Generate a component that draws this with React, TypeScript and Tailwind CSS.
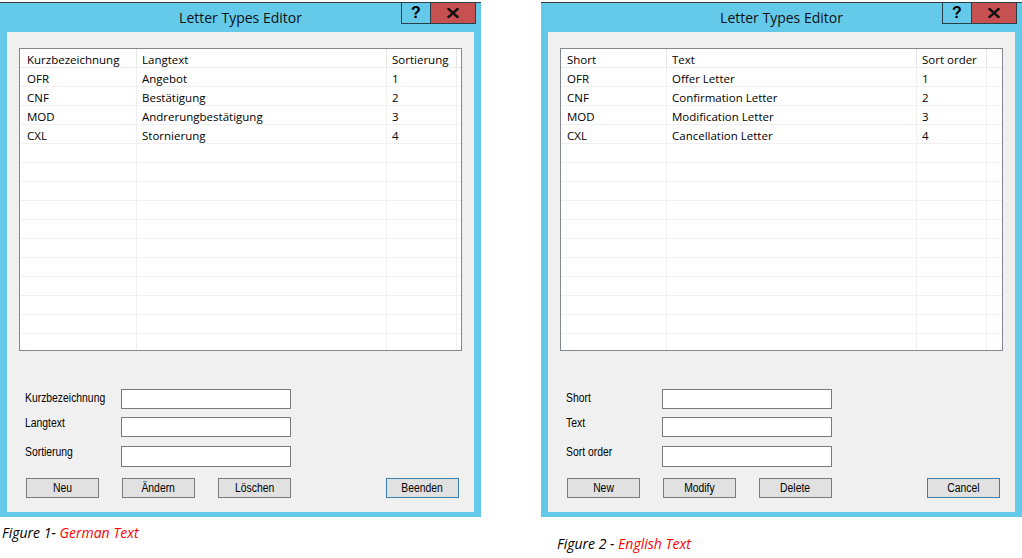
import React from "react";

type Row = [string, string, string];

type Lang = {
  cols: Row;
  firstCol: string;
  rows: Row[];
  labels: Row;
  buttons: Row;
  close: string;
};

const german: Lang = {
  cols: ["Kurzbezeichnung", "Langtext", "Sortierung"],
  firstCol: "w-[117px] pl-[7px]",
  rows: [
    ["OFR", "Angebot", "1"],
    ["CNF", "Bestätigung", "2"],
    ["MOD", "Andrerungbestätigung", "3"],
    ["CXL", "Stornierung", "4"],
  ],
  labels: ["Kurzbezeichnung", "Langtext", "Sortierung"],
  buttons: ["Neu", "Ändern", "Löschen"],
  close: "Beenden",
};

const english: Lang = {
  cols: ["Short", "Text", "Sort order"],
  firstCol: "w-[106px] pl-[6px]",
  rows: [
    ["OFR", "Offer Letter", "1"],
    ["CNF", "Confirmation Letter", "2"],
    ["MOD", "Modification Letter", "3"],
    ["CXL", "Cancellation Letter", "4"],
  ],
  labels: ["Short", "Text", "Sort order"],
  buttons: ["New", "Modify", "Delete"],
  close: "Cancel",
};

// the dialog uses a tall, narrow sans; squeeze Liberation Sans to get there
const narrow = "font-['Liberation_Sans',sans-serif] text-[12.5px] leading-[15px] text-black";
const squeeze = "inline-block whitespace-nowrap scale-x-[0.83]";

function Grid({ lang }: { lang: Lang }) {
  // 4 data rows, the rest are empty lines like the real grid
  const rows: Row[] = [...lang.rows];
  while (rows.length < 15) rows.push(["", "", ""]);

  return (
    <div className="w-[443px] h-[303px] border border-[#828790] bg-white overflow-hidden font-['Open_Sans',sans-serif] text-[11.5px] text-black">
      {/* header */}
      <div className="flex h-[19px] border-b border-[#EBEBEB]">
        <div className={`${lang.firstCol} shrink-0 border-r border-[#E5E5E5] pt-[3px] leading-[15px]`}>{lang.cols[0]}</div>
        <div className="w-[250px] shrink-0 border-r border-[#E5E5E5] pl-[5px] pt-[3px] leading-[15px]">{lang.cols[1]}</div>
        <div className="w-[70px] shrink-0 border-r border-[#E5E5E5] pl-[5px] pt-[3px] leading-[15px]">{lang.cols[2]}</div>
        <div className="flex-1" />
      </div>
      {rows.map((r, i) => (
        <div key={i} className="flex h-[19px] border-b border-[#F0F0F0]">
          <div className={`${lang.firstCol} shrink-0 border-r border-[#F0F0F0] leading-[15px] pt-[3px]`}>{r[0]}</div>
          <div className="w-[250px] shrink-0 border-r border-[#F0F0F0] pl-[5px] leading-[15px] pt-[3px]">{r[1]}</div>
          <div className="w-[70px] shrink-0 border-r border-[#F0F0F0] pl-[5px] leading-[15px] pt-[3px]">{r[2]}</div>
          <div className="flex-1" />
        </div>
      ))}
    </div>
  );
}

function Button({ label, primary }: { label: string; primary?: boolean }) {
  return (
    <button
      className={`w-[73px] h-[20px] bg-[#E1E1E1] border ${primary ? "border-[#3C7FB1]" : "border-[#7A7A7A]"} ${narrow} flex items-center justify-center`}
    >
      <span className={squeeze}>{label}</span>
    </button>
  );
}

function Field({ label, gap, labelOffset, tall }: { label: string; gap: string; labelOffset: string; tall?: boolean }) {
  return (
    <div className={`flex items-start ${gap}`}>
      <div className={`w-[96px] ${labelOffset} ${narrow}`}>
        <span className={`${squeeze} origin-left`}>{label}</span>
      </div>
      <div className={`w-[170px] ${tall ? "h-[21px]" : "h-[20px]"} bg-white border border-[#7A7A7A]`} />
    </div>
  );
}

function Window({ lang }: { lang: Lang }) {
  return (
    <div className="w-[481px] h-[515px] bg-[#65C9EA] border-t border-[#3A3A3A] flex flex-col">
      {/* title bar */}
      <div className="h-[29px] flex shrink-0">
        <div className="w-[80px]" />
        <div className="flex-1 text-center font-['Open_Sans',sans-serif] text-[14px] leading-[29px] text-[#111]">
          Letter Types Editor
        </div>
        <div className="w-[80px] flex justify-end pr-[5px]">
          <div className="-mt-[1px] h-[22px] flex">
            <div className="w-[30px] h-full border border-[#2B3F48] flex items-center justify-center font-['Liberation_Sans',sans-serif] font-bold text-[16px] text-black">
              ?
            </div>
            <div className="w-[46px] h-full -ml-[1px] border border-[#2B3F48] bg-[#C75050] flex items-center justify-center">
              <svg width="12" height="10" viewBox="0 0 12 10">
                <path d="M1.5 1 L10.5 9 M10.5 1 L1.5 9" stroke="#111" strokeWidth="2.4" strokeLinecap="square" />
              </svg>
            </div>
          </div>
        </div>
      </div>

      {/* client area */}
      <div className="mx-[7px] h-[480px] bg-[#F0F0F0] pt-[16px] flex flex-col">
        <div className="pl-[12px]">
          <Grid lang={lang} />
        </div>

        <div className="pl-[18px] mt-[38px] flex flex-col">
          <Field label={lang.labels[0]} gap="" labelOffset="mt-[2px]" />
          <Field label={lang.labels[1]} gap="mt-[8px]" labelOffset="-mt-[1px]" />
          <Field label={lang.labels[2]} gap="mt-[9px]" labelOffset="-mt-[1px]" tall />
        </div>

        <div className="flex mt-[11px] pl-[19px] pr-[15px]">
          <div className="flex gap-[23px]">
            <Button label={lang.buttons[0]} />
            <Button label={lang.buttons[1]} />
            <Button label={lang.buttons[2]} />
          </div>
          <div className="flex-1" />
          <Button label={lang.close} primary />
        </div>
      </div>
    </div>
  );
}

export default function App() {
  return (
    <div className="w-[1022px] h-[558px] bg-white flex items-start pt-[2px]">
      <div className="flex flex-col">
        <Window lang={german} />
        <p className="mt-[7px] pl-[2px] font-['Open_Sans',sans-serif] italic text-[14px] leading-[18px] text-black">
          Figure 1- <span className="text-[#FF0000]">German Text</span>
        </p>
      </div>
      <div className="flex flex-col ml-[60px]">
        <Window lang={english} />
        <p className="mt-[18px] pl-[16px] font-['Open_Sans',sans-serif] italic text-[14px] leading-[18px] text-black">
          Figure 2 - <span className="text-[#FF0000]">English Text</span>
        </p>
      </div>
    </div>
  );
}
